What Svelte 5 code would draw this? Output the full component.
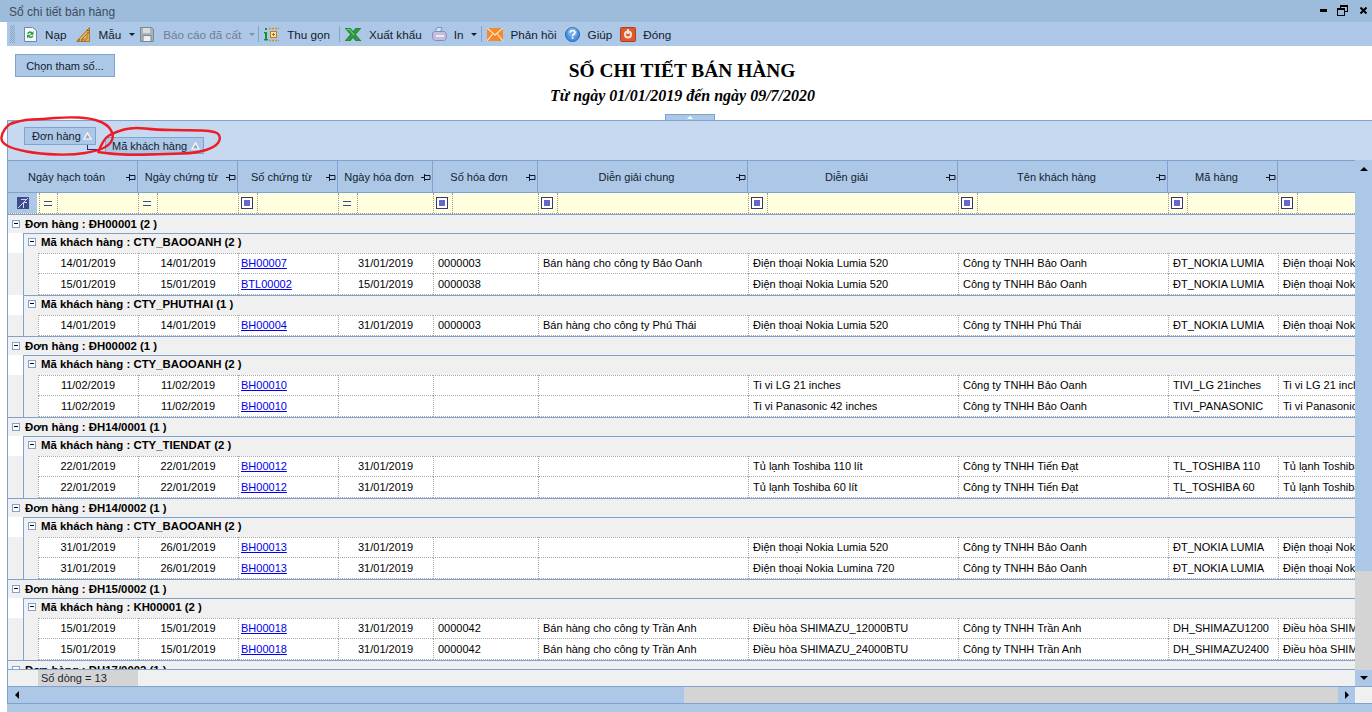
<script>
    const cols = [
        { w: 130, title: 'Ngày hạch toán', op: 'eq' },
        { w: 100, title: 'Ngày chứng từ', op: 'eq' },
        { w: 100, title: 'Số chứng từ', op: 'box' },
        { w: 95, title: 'Ngày hóa đơn', op: 'eq' },
        { w: 105, title: 'Số hóa đơn', op: 'box' },
        { w: 210, title: 'Diễn giải chung', op: 'box' },
        { w: 210, title: 'Diễn giải', op: 'box' },
        { w: 210, title: 'Tên khách hàng', op: 'box' },
        { w: 110, title: 'Mã hàng', op: 'box' },
        { w: 77, title: '', op: 'box' }
    ];

    const nokia520 = ['Điện thoại Nokia Lumia 520', 'ĐT_NOKIA LUMIA'];
    const baoOanh = 'Công ty TNHH Bảo Oanh';

    const orders = [
        {
            name: 'ĐH00001', count: 2,
            customers: [
                { name: 'CTY_BAOOANH', count: 2, rows: [
                    ['14/01/2019', '14/01/2019', 'BH00007', '31/01/2019', '0000003', 'Bán hàng cho công ty Bảo Oanh', nokia520[0], baoOanh, nokia520[1]],
                    ['15/01/2019', '15/01/2019', 'BTL00002', '15/01/2019', '0000038', '', nokia520[0], baoOanh, nokia520[1]]
                ] },
                { name: 'CTY_PHUTHAI', count: 1, rows: [
                    ['14/01/2019', '14/01/2019', 'BH00004', '31/01/2019', '0000003', 'Bán hàng cho công ty Phú Thái', nokia520[0], 'Công ty TNHH Phú Thái', nokia520[1]]
                ] }
            ]
        },
        {
            name: 'ĐH00002', count: 1,
            customers: [
                { name: 'CTY_BAOOANH', count: 2, rows: [
                    ['11/02/2019', '11/02/2019', 'BH00010', '', '', '', 'Ti vi LG 21 inches', baoOanh, 'TIVI_LG 21inches'],
                    ['11/02/2019', '11/02/2019', 'BH00010', '', '', '', 'Ti vi Panasonic 42 inches', baoOanh, 'TIVI_PANASONIC']
                ] }
            ]
        },
        {
            name: 'ĐH14/0001', count: 1,
            customers: [
                { name: 'CTY_TIENDAT', count: 2, rows: [
                    ['22/01/2019', '22/01/2019', 'BH00012', '31/01/2019', '', '', 'Tủ lạnh Toshiba 110 lít', 'Công ty TNHH Tiến Đạt', 'TL_TOSHIBA 110'],
                    ['22/01/2019', '22/01/2019', 'BH00012', '31/01/2019', '', '', 'Tủ lạnh Toshiba 60 lít', 'Công ty TNHH Tiến Đạt', 'TL_TOSHIBA 60']
                ] }
            ]
        },
        {
            name: 'ĐH14/0002', count: 1,
            customers: [
                { name: 'CTY_BAOOANH', count: 2, rows: [
                    ['31/01/2019', '26/01/2019', 'BH00013', '31/01/2019', '', '', nokia520[0], baoOanh, nokia520[1]],
                    ['31/01/2019', '26/01/2019', 'BH00013', '31/01/2019', '', '', 'Điện thoại Nokia Lumina 720', baoOanh, nokia520[1]]
                ] }
            ]
        },
        {
            name: 'ĐH15/0002', count: 1,
            customers: [
                { name: 'KH00001', count: 2, rows: [
                    ['15/01/2019', '15/01/2019', 'BH00018', '31/01/2019', '0000042', 'Bán hàng cho công ty Trần Anh', 'Điều hòa SHIMAZU_12000BTU', 'Công ty TNHH Trần Anh', 'DH_SHIMAZU1200'],
                    ['15/01/2019', '15/01/2019', 'BH00018', '31/01/2019', '0000042', 'Bán hàng cho công ty Trần Anh', 'Điều hòa SHIMAZU_24000BTU', 'Công ty TNHH Trần Anh', 'DH_SHIMAZU2400']
                ] }
            ]
        },
        { name: 'ĐH17/0002', count: 1, customers: [] }
    ];

    // cột cuối lặp lại tên hàng, bị cắt bởi thanh cuộn
    const dataWidths = [100, 100, 100, 95, 105, 210, 210, 210, 110, 77];
    const centered = [0, 1, 3];

    // nét khoanh đỏ: nối các điểm bằng đường cong bậc hai
    function smooth(pts) {
        let d = `M${pts[0][0]} ${pts[0][1]}`;
        for (let i = 1; i < pts.length - 1; i++) {
            const mx = (pts[i][0] + pts[i + 1][0]) / 2;
            const my = (pts[i][1] + pts[i + 1][1]) / 2;
            d += `Q${pts[i][0]} ${pts[i][1]} ${mx} ${my}`;
        }
        const last = pts[pts.length - 1];
        return d + `L${last[0]} ${last[1]}`;
    }

    const markA = smooth([[8, 13], [20, 8], [43, 7], [67, 5], [90, 6], [107, 12], [114, 23], [110, 33], [97, 39], [73, 43], [40, 42], [13, 37], [1, 30], [2, 21], [8, 13], [14, 10]]);
    const markB = smooth([[98, 41], [103, 27], [115, 20], [133, 15], [157, 18], [187, 18], [217, 19], [221, 27], [215, 35], [197, 41], [167, 42], [133, 43], [113, 42], [98, 40]]);
</script>

<div class="window">
    <div class="titlebar">
        <span class="title-text">Sổ chi tiết bán hàng</span>
        <div class="win-btns">
            <svg width="7" height="3" viewBox="0 0 7 3"><rect width="7" height="3" fill="#000" /></svg>
            <svg width="11" height="11" viewBox="0 0 11 11" fill="none" stroke="#000"><rect x="3.500" y=".5" width="7" height="6" /><path d="M3.500 1.500h7" /><rect x=".5" y="3.500" width="7" height="7" fill="#9dbbdb" /><path d="M.5 4.500h7" /></svg>
            <svg width="7" height="7" viewBox="0 0 7 7" stroke="#000" stroke-width="2"><path d="M.5.5l6 6M6.500.5l-6 6" /></svg>
        </div>
    </div>

    <div class="toolbar">
        <span class="grip"></span>
        <svg class="ic first" width="13" height="15" viewBox="0 0 13 15"><path d="M.5.5h8l4 3v11H.5z" fill="#f4f8fd" stroke="#6f86ad" /><path d="M3 6.500a3 3 0 0 1 5.200-1L9.500 4v3.800H5.800l1.300-1.300A1.700 1.700 0 0 0 4.300 7z" fill="#2c9a35" /><path d="M9.500 9a3 3 0 0 1-5.200 1L3 11.300V7.700h3.700L5.400 9a1.700 1.700 0 0 0 2.800-.5z" fill="#2c9a35" /></svg>
        <span class="lbl">Nạp</span>
        <svg class="ic gap10" width="14" height="15" viewBox="0 0 14 15"><path d="M13.500.5v14H.5z" fill="#e9b04e" stroke="#a8752a" /><path d="M11 7v5H6z" fill="#b0c8e6" stroke="#a8752a" /><path d="M3 14v-2M6 14v-2M9 14v-1M11 3.500h2M11 6h2" stroke="#7a4f14" /></svg>
        <span class="lbl">Mẫu</span>
        <span class="caret"></span>
        <svg class="ic save" width="14" height="15" viewBox="0 0 14 15"><path d="M.5.500h11l2 2v12H.5z" fill="#a9b2bc" stroke="#7e8790" /><rect x="3" y="1" width="7" height="5" fill="#d8dde2" /><rect x="3" y="8.500" width="8" height="6" fill="#eef0f2" stroke="#7e8790" /></svg>
        <span class="lbl gap9 disabled">Báo cáo đã cất</span>
        <span class="caret off"></span>
        <span class="sep narrow"></span>
        <svg class="ic" width="15" height="15" viewBox="0 0 15 15"><rect x="1" y="1" width="2" height="2" fill="#16913a" /><path d="M0 5h3v7h1v1.500H0V12h1V6.500H0z" fill="#16913a" /><rect x="6.500" y="4.500" width="6" height="6" fill="#f8e4a8" stroke="#c07a20" /><path d="M8 7.500h3M9.500 6v3" stroke="#b0691c" /><path d="M5 1.500h10M5 13.500h10" stroke="#c9912f" stroke-width="1.500" stroke-dasharray="2 1" /></svg>
        <span class="lbl">Thu gọn</span>
        <span class="sep wide"></span>
        <svg class="ic" width="16" height="13" viewBox="0 0 16 13"><path d="M0 0h5l3 3.500L11 0h5l-5.500 6.500L16 13h-5L8 9.500 5 13H0l5.500-6.500z" fill="#2a9c3c" stroke="#12662a" stroke-width=".6" /><path d="M2.500 1.500h2L9 7" stroke="#8fdc8d" fill="none" /></svg>
        <span class="lbl">Xuất khẩu</span>
        <svg class="ic gap10" width="15" height="14" viewBox="0 0 15 14"><path d="M3 5l2-4.500h5L8.500 5z" fill="#cfe3f8" stroke="#7d96c0" /><path d="M.5 7c0-2 1.500-2.500 3-2.500h8c2 0 3 1.500 3 4 0 3-1 5-3 5h-8c-2 0-3-2-3-4z" fill="#c3bee0" stroke="#8d88b8" /><path d="M4 9h8" stroke="#ece9f8" stroke-width="2" /></svg>
        <span class="lbl gap7">In</span>
        <span class="caret"></span>
        <span class="sep"></span>
        <svg class="ic" width="16" height="13" viewBox="0 0 16 13"><rect width="16" height="13" fill="#f58a2c" /><path d="M0 0l8 7 8-7M0 13l6-7.500M16 13l-6-7.500" fill="none" stroke="#fde6c8" stroke-width="1.200" /></svg>
        <span class="lbl gap7">Phản hồi</span>
        <svg class="ic" width="15" height="15" viewBox="0 0 15 15"><circle cx="7.500" cy="7.500" r="7" fill="#4b8fe0" stroke="#2465b4" /><circle cx="7.500" cy="5.500" r="5" fill="#8ec0f2" opacity=".6" /><path d="M5.200 5.800c0-3 4.800-3 4.800-.3 0 1.600-2.400 1.800-2.400 3.400" fill="none" stroke="#fff" stroke-width="1.700" /><rect x="6.700" y="10" width="1.800" height="1.800" fill="#fff" /></svg>
        <span class="lbl">Giúp</span>
        <svg class="ic" width="16" height="15" viewBox="0 0 16 15"><rect x=".5" y=".5" width="15" height="14" rx="1" fill="#dd5a30" stroke="#b83c18" /><circle cx="8" cy="7.500" r="4" fill="#f3e6df" /><circle cx="8" cy="7.500" r="2" fill="#dd5a30" /><rect x="7" y="2" width="2" height="5" fill="#f3e6df" /></svg>
        <span class="lbl gap7">Đóng</span>
    </div>

    <div class="report-head">
        <button class="param-btn">Chọn tham số...</button>
        <div class="heading">
            <h1>SỔ CHI TIẾT BÁN HÀNG</h1>
            <p>Từ ngày 01/01/2019 đến ngày 09/7/2020</p>
        </div>
        <div class="handle"><span></span></div>
    </div>

    <div class="grid-wrap">
        <div class="group-panel">
            <div class="chip chip-a">Đơn hàng
                <svg class="sort" width="9" height="8" viewBox="0 0 9 8"><path d="M4.500 1L8 7H1z" fill="#97a9c2" stroke="#fff" stroke-width="1.200" /></svg>
            </div>
            <div class="chip chip-b">Mã khách hàng
                <svg class="sort" width="9" height="8" viewBox="0 0 9 8"><path d="M4.500 1L8 7H1z" fill="#97a9c2" stroke="#fff" stroke-width="1.200" /></svg>
            </div>
            <span class="link"></span>
        </div>

        <div class="grid-main">
            <div class="grid-left">
                <div class="head-row">
                    {#each cols as c}
                        <div class="head-cell" style="width:{c.w}px">
                            <span>{c.title}</span>
                            {#if c.title}
                                <svg class="pin" width="10" height="7" viewBox="0 0 10 7" fill="none" stroke="#10182c"><path d="M0 3.500h3.500M3.500 0v7M3.500 1.500h5.500v4H3.500" /></svg>
                            {/if}
                        </div>
                    {/each}
                </div>
                <div class="filter-row">
                    <div class="indicator">
                        <svg width="12" height="12" viewBox="0 0 12 12"><rect width="12" height="12" fill="#3d4a8c" /><path d="M1 11L11 1M4 2.500h6M6.500 11V5.500h3.500" stroke="#cdd6f4" fill="none" /></svg>
                    </div>
                    {#each dataWidths as w, i}
                        <div class="filter-cell" class:first={i === 0} style="width:{i === 0 ? 101 : w}px">
                            <div class="op">
                                {#if cols[i].op === 'eq'}
                                    <span class="eq"></span>
                                {:else}
                                    <span class="box"><i></i></span>
                                {/if}
                            </div>
                        </div>
                    {/each}
                </div>

                <div class="rows">
                    {#each orders as o}
                        <div class="order-row">
                            <span class="expander"></span>
                            <b>Đơn hàng : {o.name} ({o.count} )</b>
                        </div>
                        {#each o.customers as k}
                            <div class="cust-row">
                                <span class="expander"></span>
                                <b>Mã khách hàng : {k.name} ({k.count} )</b>
                            </div>
                            {#each k.rows as r, j}
                                <div class="data-row">
                                    <div class="gutter"></div>
                                    {#each dataWidths as w, i}
                                        <div class="cell" class:top={j === 0} class:center={centered.includes(i)} class:linked={i === 2} style="width:{w}px">
                                            {#if i === 2}
                                                <a href="#top" class="doc">{r[i]}</a>
                                            {:else if i === 9}
                                                {r[6]}
                                            {:else}
                                                {r[i]}
                                            {/if}
                                        </div>
                                    {/each}
                                </div>
                            {/each}
                        {/each}
                    {/each}
                </div>

                <div class="footer-row">
                    <div class="foot-cell">Số dòng = 13</div>
                </div>
            </div>

            <div class="vscroll">
                <div class="v-thumb"><span class="arrow up"></span></div>
                <div class="v-track"></div>
                <div class="v-btn"><span class="arrow down"></span></div>
            </div>
        </div>

        <div class="hscroll">
            <div class="h-thumb"><span class="arrow left"></span></div>
            <div class="h-track"></div>
            <div class="h-btn"><span class="arrow right"></span></div>
            <div class="h-corner"></div>
        </div>
    </div>
    <div class="bottom-bar"></div>

    <svg class="marks" width="230" height="50" viewBox="0 0 230 50" fill="none" stroke="#ee1c24" stroke-width="2.400">
        <path d={markA} />
        <path d={markB} />
    </svg>
</div>

<style>
    :global(body) {
        margin: 0;
        background: #fff;
    }

    .window {
        position: relative;
        display: flex;
        flex-direction: column;
        width: 1372px;
        height: 712px;
        overflow: hidden;
        font-family: "Liberation Sans", Arial, sans-serif;
        font-size: 11px;
        color: #000;
        background: #fff;
    }

    .titlebar {
        flex: 0 0 22px;
        display: flex;
        align-items: center;
        justify-content: space-between;
        box-sizing: border-box;
        background: #9dbbdb;
        padding: 1px 5px 0 9px;
    }

    .title-text {
        color: #3c4c60;
        font-size: 12px;
    }

    .win-btns {
        display: flex;
        align-items: center;
        gap: 10px;
        padding-bottom: 3px;
    }

    .win-btns svg:last-child {
        margin-left: 2px;
    }

    .toolbar {
        flex: 0 0 24px;
        margin-left: 7px;
        display: flex;
        align-items: center;
        background: #adc8e6;
        font-size: 11.7px;
        color: #101c30;
    }

    .grip {
        width: 5px;
        height: 18px;
        margin-left: 3px;
        background: repeating-conic-gradient(#8ea6c4 0 25%, transparent 0 50%) 0 0 / 2px 2px;
    }

    .ic {
        flex: none;
        margin-left: 8px;
    }

    .ic.first {
        margin-left: 9px;
    }

    .ic.gap10 {
        margin-left: 10px;
    }

    .ic.save {
        margin-left: 5px;
    }

    .lbl {
        margin-left: 8px;
        white-space: nowrap;
    }

    .lbl.gap7 {
        margin-left: 7px;
    }

    .lbl.gap9 {
        margin-left: 9px;
    }

    .lbl.disabled {
        color: #6f7f93;
    }

    .caret {
        width: 0;
        height: 0;
        margin: 0 0 0 8px;
        border: 3px solid transparent;
        border-top: 3px solid #101c30;
        border-bottom: 0;
    }

    .caret.off {
        border-top-color: #7f8fa5;
    }

    .sep {
        width: 1px;
        height: 16px;
        margin: 0 -3px 0 4px;
        background: #7fa3d1;
    }

    .sep.narrow {
        margin-left: 3px;
    }

    .sep.wide {
        margin-left: 9px;
    }

    .report-head {
        position: relative;
        flex: 0 0 74px;
        display: flex;
        padding: 8px 0 0 15px;
        box-sizing: border-box;
    }

    .param-btn {
        width: 100px;
        height: 23px;
        padding: 0;
        background: #adc8e6;
        border: 1px solid #7fa3d1;
        font: 11px "Liberation Sans", Arial, sans-serif;
        color: #101c30;
    }

    .heading {
        position: absolute;
        left: 0;
        right: 8px;
        top: 13px;
        text-align: center;
        font-family: "Liberation Serif", "Times New Roman", serif;
        color: #000;
    }

    .heading h1 {
        margin: 0;
        font-size: 19.4px;
        line-height: 24px;
        font-weight: bold;
    }

    .heading p {
        margin: 3px 0 0 1px;
        font-size: 16px;
        line-height: 20px;
        font-weight: bold;
        font-style: italic;
    }

    .handle {
        position: absolute;
        left: 665px;
        bottom: 0;
        width: 50px;
        height: 6px;
        background: #adc8e6;
        border: 1px solid #7fa3d1;
        border-bottom: 0;
        display: flex;
        justify-content: center;
        padding-top: 1px;
        box-sizing: border-box;
    }

    .handle span {
        width: 0;
        height: 0;
        border: 3px solid transparent;
        border-bottom: 3px solid #fff;
        border-top: 0;
    }

    .grid-wrap {
        flex: 1;
        min-height: 0;
        margin-left: 7px;
        display: flex;
        flex-direction: column;
        border-left: 1px solid #7fa3d1;
    }

    .group-panel {
        position: relative;
        flex: 0 0 40px;
        box-sizing: border-box;
        background: #c6d9f0;
        border-top: 1px solid #7fa3d1;
    }

    .chip {
        position: absolute;
        z-index: 1;
        display: flex;
        align-items: center;
        justify-content: space-between;
        box-sizing: border-box;
        height: 18px;
        padding: 0 3px 0 7px;
        background: #adc8e6;
        border: 1px solid #7fa3d1;
        color: #101c30;
        white-space: nowrap;
    }

    .chip-a {
        left: 16px;
        top: 6px;
        width: 72px;
    }

    .chip-b {
        left: 97px;
        top: 16px;
        height: 17px;
        width: 99px;
        padding-left: 6px;
    }

    .sort {
        flex: none;
    }

    .link {
        position: absolute;
        left: 79px;
        top: 23px;
        width: 12px;
        height: 5px;
        border-left: 1px solid #1d2a80;
        border-bottom: 1px solid #1d2a80;
    }

    .grid-main {
        flex: 1;
        min-height: 0;
        display: flex;
    }

    .grid-left {
        flex: 0 0 1347px;
        width: 1347px;
        display: flex;
        flex-direction: column;
        overflow: hidden;
    }

    .head-row {
        flex: 0 0 32px;
        display: flex;
        box-sizing: border-box;
        background: #adc8e6;
        border-top: 1px solid #7fa3d1;
    }

    .head-cell {
        position: relative;
        flex: none;
        display: flex;
        align-items: center;
        justify-content: center;
        box-sizing: border-box;
        padding-right: 12px;
        border-right: 1px solid #7fa3d1;
        color: #101c30;
    }

    .head-cell:last-child {
        border-right: 0;
    }

    .pin {
        position: absolute;
        right: 1px;
        top: 13px;
    }

    .filter-row {
        flex: 0 0 22px;
        display: flex;
        box-sizing: border-box;
        background: #ffffe0;
        border-top: 1px solid #7fa3d1;
        border-bottom: 1px dotted #9a9a9a;
    }

    .indicator {
        flex: 0 0 29px;
        display: flex;
        align-items: center;
        justify-content: center;
        background: #adc8e6;
    }

    .filter-cell {
        flex: none;
        display: flex;
        box-sizing: border-box;
    }

    .filter-cell.first {
        padding-left: 2px;
    }

    .op {
        flex: 0 0 20px;
        display: flex;
        align-items: center;
        justify-content: center;
        box-sizing: border-box;
        padding-right: 2px;
        border-left: 1px dotted #999;
        border-right: 1px dotted #999;
    }

    .filter-cell.first .op {
        flex-basis: 19px;
    }

    .eq {
        width: 8px;
        height: 3px;
        border-top: 1px solid #3d4a8c;
        border-bottom: 1px solid #3d4a8c;
    }

    .box {
        display: flex;
        align-items: center;
        justify-content: center;
        width: 12px;
        height: 12px;
        box-sizing: border-box;
        border: 1px solid #34386e;
        background: #fff;
    }

    .box i {
        display: block;
        width: 6px;
        height: 6px;
        background: #6666cc;
    }

    .rows {
        flex: 1;
        min-height: 0;
        overflow: hidden;
        background: #fff;
    }

    .order-row,
    .cust-row {
        display: flex;
        align-items: center;
        box-sizing: border-box;
        background: #f0f0f0;
        border-top: 1px solid #7fa3d1;
        font-size: 11.4px;
        color: #000;
    }

    .order-row {
        height: 19px;
        padding: 0 0 1px 4px;
    }

    .cust-row {
        height: 20px;
        margin-left: 15px;
        padding: 0 0 4px 4px;
        border-left: 1px solid #7fa3d1;
    }

    .expander {
        position: relative;
        flex: none;
        width: 8px;
        height: 8px;
        margin-right: 5px;
        box-sizing: border-box;
        border: 1px solid #7fa3d1;
        background: #fff;
    }

    .expander::after {
        content: '';
        position: absolute;
        left: 1px;
        top: 2px;
        width: 4px;
        height: 1px;
        background: #000;
    }

    .data-row {
        display: flex;
        height: 21px;
    }

    .gutter {
        flex: 0 0 30px;
        background: linear-gradient(90deg, #f0f0f0 15px, #7fa3d1 15px, #7fa3d1 16px, #f0f0f0 16px);
    }

    .cell {
        flex: none;
        display: flex;
        align-items: center;
        box-sizing: border-box;
        padding-left: 4px;
        border-left: 1px dotted #aaa;
        border-bottom: 1px dotted #aaa;
        white-space: nowrap;
        overflow: hidden;
    }

    .cell.top {
        border-top: 1px dotted #aaa;
        padding-bottom: 1px;
    }

    .cell.center {
        justify-content: center;
        padding-left: 0;
        padding-right: 1px;
    }

    .cell.linked {
        padding-left: 2px;
    }

    .doc {
        color: #0000ee;
        text-decoration: underline;
    }

    .footer-row {
        flex: 0 0 17px;
        position: relative;
        z-index: 1;
        box-sizing: border-box;
        display: flex;
        padding-left: 30px;
        background: #f0f0f0;
        border-top: 1px solid #7fa3d1;
    }

    .foot-cell {
        width: 100px;
        padding-left: 3px;
        box-sizing: border-box;
        background: #d4d4d4;
        line-height: 16px;
        color: #1c2430;
    }

    .vscroll {
        flex: 0 0 17px;
        display: flex;
        flex-direction: column;
    }

    .v-thumb {
        flex: 0 0 411px;
        background: #adc8e6;
        display: flex;
        justify-content: center;
        padding-top: 7px;
        box-sizing: border-box;
    }

    .v-track {
        flex: 1;
        background: #d4d4d4;
    }

    .v-btn {
        flex: 0 0 16px;
        background: #adc8e6;
        display: flex;
        justify-content: center;
        padding-top: 6px;
        box-sizing: border-box;
    }

    .hscroll {
        flex: 0 0 18px;
        display: flex;
        align-items: stretch;
        box-sizing: border-box;
        border-top: 1px solid #7fa3d1;
        border-bottom: 1px solid #7fa3d1;
    }

    .h-thumb {
        flex: 0 0 676px;
        background: #adc8e6;
        display: flex;
        align-items: center;
        padding-left: 7px;
        box-sizing: border-box;
    }

    .h-track {
        flex: 1;
        background: #d4d4d4;
    }

    .h-btn {
        flex: 0 0 17px;
        background: #adc8e6;
        display: flex;
        align-items: center;
        justify-content: center;
    }

    .h-corner {
        flex: 0 0 17px;
        background: #f0f0f0;
    }

    .arrow {
        display: block;
        width: 0;
        height: 0;
        border: 4px solid transparent;
    }

    .arrow.up {
        border-top: 0;
        border-bottom: 4px solid #000;
    }

    .arrow.down {
        border-bottom: 0;
        border-top: 4px solid #000;
    }

    .arrow.left {
        border-left: 0;
        border-right: 4px solid #000;
    }

    .arrow.right {
        border-right: 0;
        border-left: 4px solid #000;
    }

    .bottom-bar {
        flex: 0 0 8px;
        margin-left: 7px;
        background: #adc8e6;
    }

    .marks {
        position: absolute;
        left: 0;
        top: 112px;
        z-index: 2;
        pointer-events: none;
    }
</style>
